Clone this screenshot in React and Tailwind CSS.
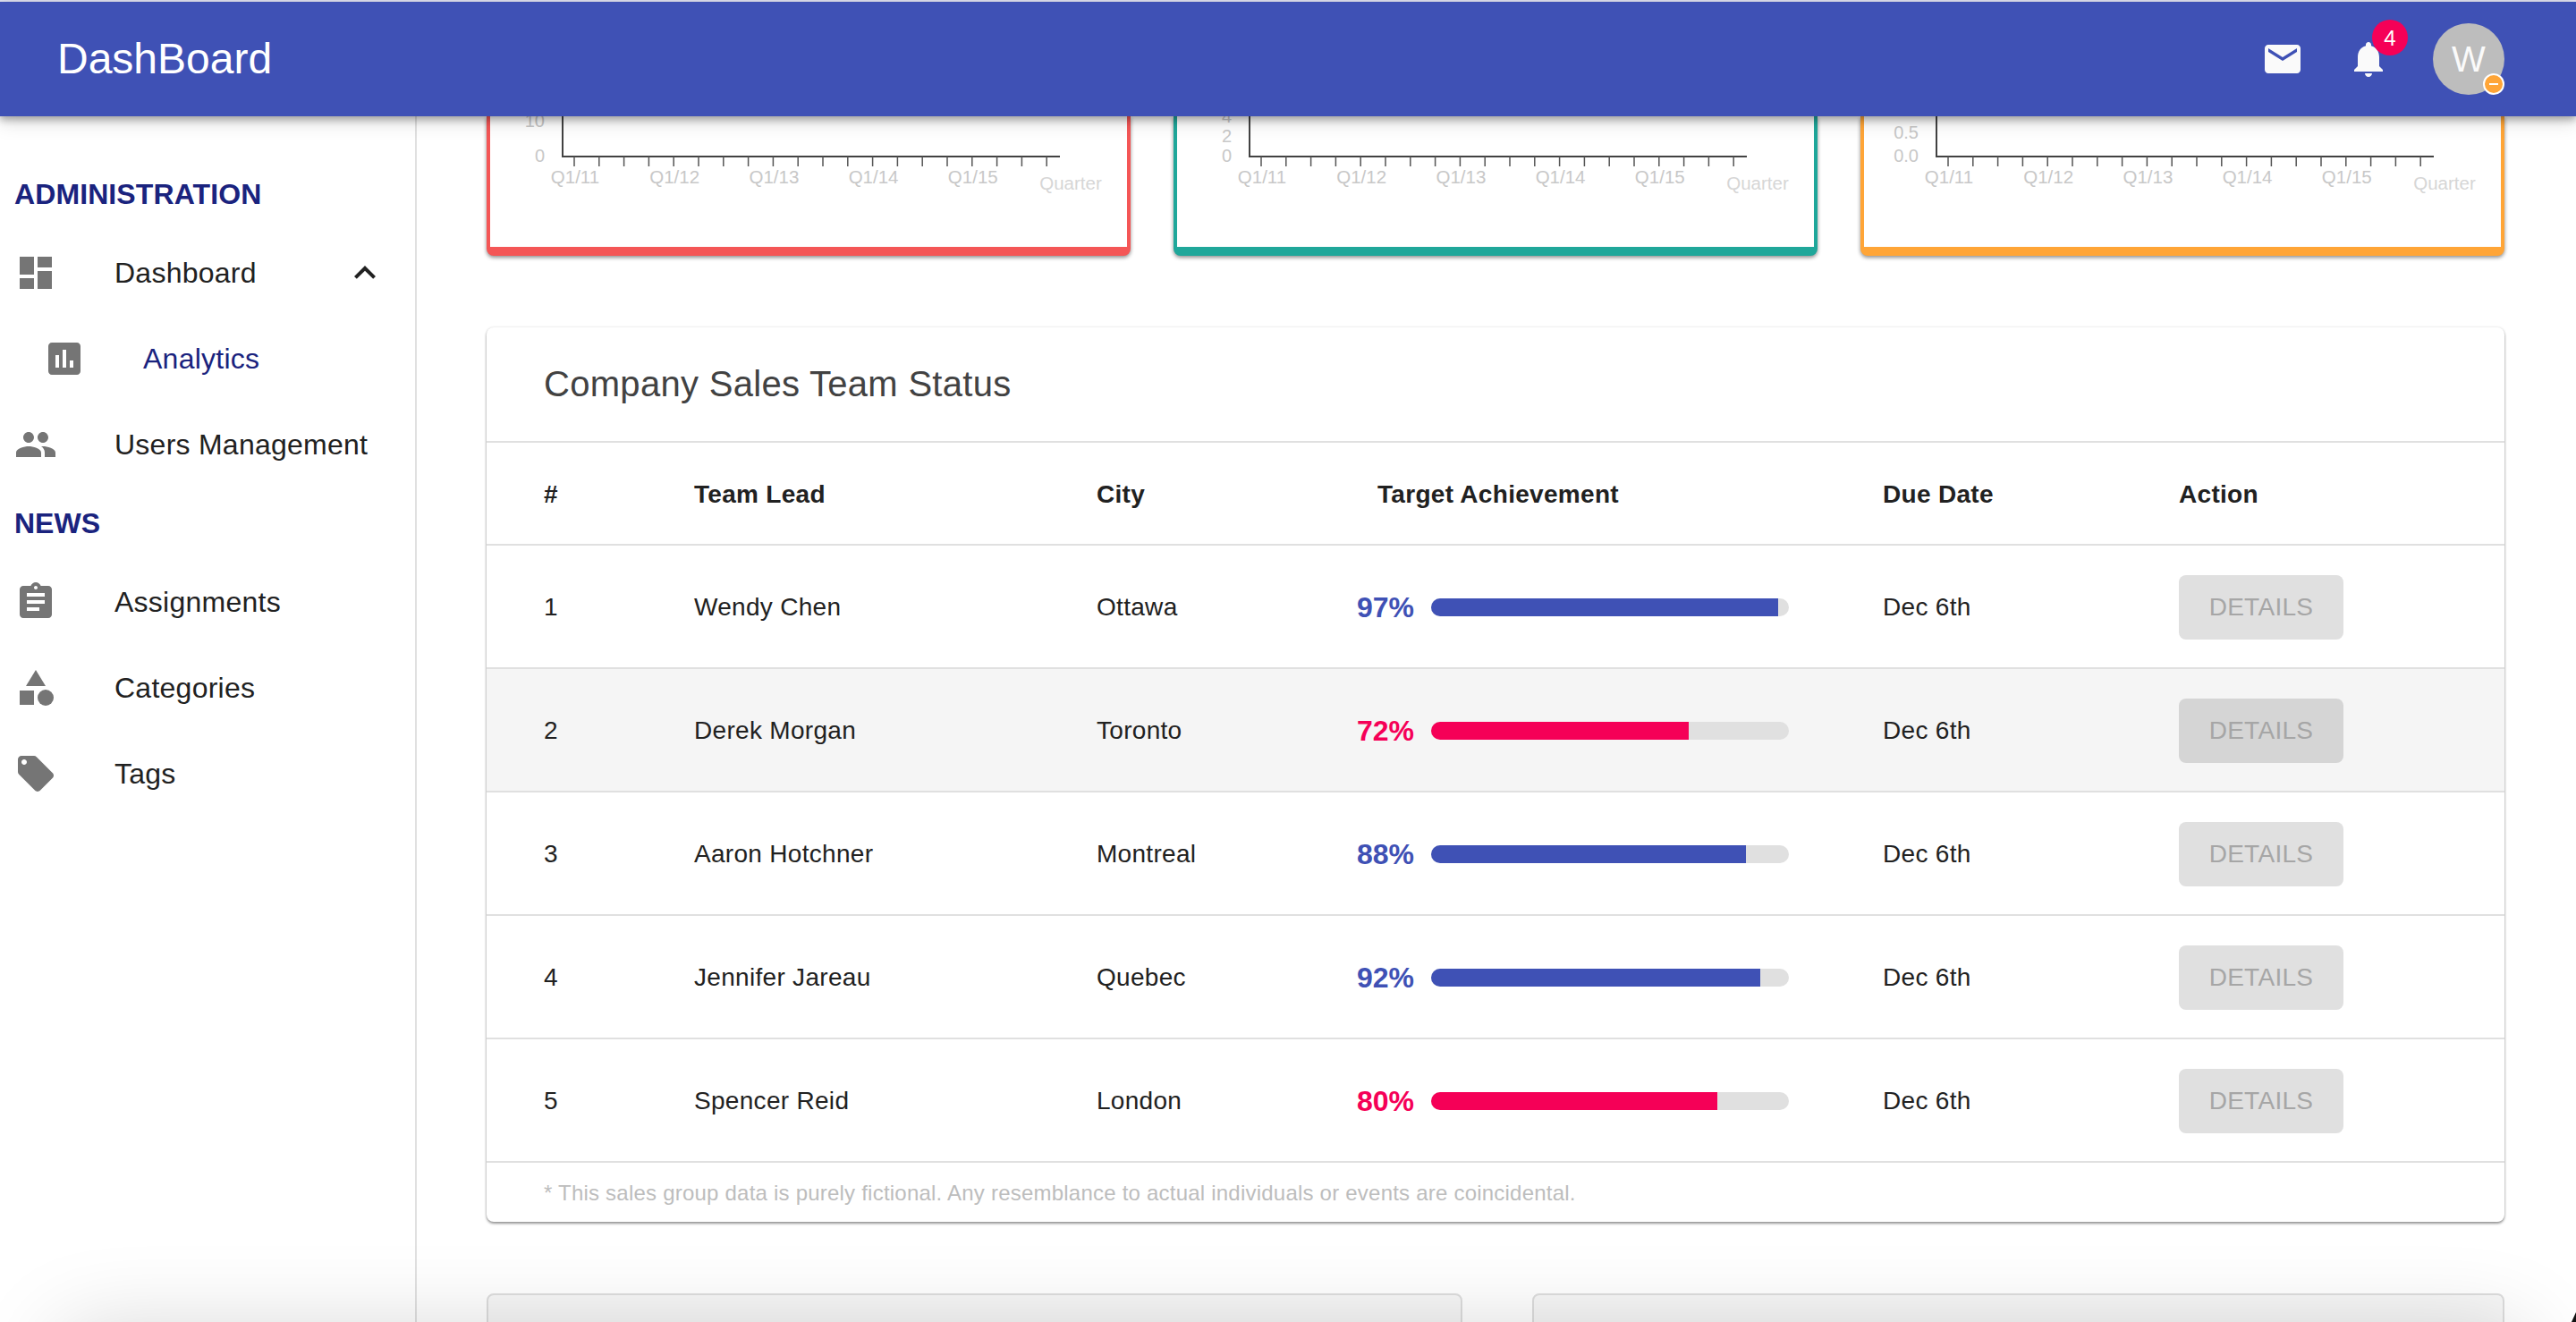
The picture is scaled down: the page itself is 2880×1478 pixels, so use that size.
import React from "react";

const rows = [
  { id: 1, name: "Wendy Chen", city: "Ottawa", pct: 97, color: "blue" },
  { id: 2, name: "Derek Morgan", city: "Toronto", pct: 72, color: "pink", shaded: true },
  { id: 3, name: "Aaron Hotchner", city: "Montreal", pct: 88, color: "blue" },
  { id: 4, name: "Jennifer Jareau", city: "Quebec", pct: 92, color: "blue" },
  { id: 5, name: "Spencer Reid", city: "London", pct: 80, color: "pink" },
];

const charts = [
  { border: "border-[#f45656]", ticks: [{ label: "10", y: 5 }, { label: "0", y: 44 }] },
  { border: "border-[#1fa79a]", ticks: [{ label: "4", y: 0 }, { label: "2", y: 22 }, { label: "0", y: 44 }] },
  { border: "border-[#ffa537]", ticks: [{ label: "0.5", y: 18 }, { label: "0.0", y: 44 }] },
];

function Icon({ d, className = "", children }) {
  return (
    <svg viewBox="0 0 24 24" className={`w-12 h-12 shrink-0 fill-current ${className}`}>
      {d && <path d={d} />}
      {children}
    </svg>
  );
}

function SideItem({ d, label, children, right, sub }) {
  return (
    <div className={`h-24 flex items-center ${sub ? "pl-12" : "pl-4"}`}>
      <Icon d={d} className="text-[#757575]">{children}</Icon>
      <span className={`ml-16 text-[32px] tracking-[0.25px] ${sub ? "text-[#1a237e]" : "text-[#212121]"}`}>{label}</span>
      {right}
    </div>
  );
}

function Chart({ chart }) {
  const xs = Array.from({ length: 20 }, (_, i) => 94 + i * 27.8);
  return (
    <div className={`h-[156px] bg-white border-x-4 border-b-[10px] rounded-b-lg shadow-[0_2px_4px_rgba(0,0,0,0.45)] ${chart.border}`}>
      <svg width="712" height="146" className="block">
        <line x1="81" y1="0" x2="81" y2="46" stroke="#424242" strokeWidth="2" />
        <line x1="80" y1="45" x2="637" y2="45" stroke="#424242" strokeWidth="2" />
        {xs.map((x) => (
          <line key={x} x1={x} y1="45" x2={x} y2="56" stroke="#555555" strokeWidth="1.5" />
        ))}
        {chart.ticks.map((t) => (
          <text key={t.label} x="61" y={t.y + 7} textAnchor="end" fontSize="20" fill="#c8c8c8">{t.label}</text>
        ))}
        {["Q1/11", "Q1/12", "Q1/13", "Q1/14", "Q1/15"].map((q, i) => (
          <text key={q} x={xs[i * 4] + 1} y="75" textAnchor="middle" fontSize="20.5" fill="#c8c8c8">{q}</text>
        ))}
        <text x="649" y="82" textAnchor="middle" fontSize="20.5" fill="#d6d6d6">Quarter</text>
      </svg>
    </div>
  );
}

export default function App() {
  return (
    <div className="relative h-[1478px] w-[2880px] overflow-hidden flex flex-col bg-white font-['Liberation_Sans',Arial,sans-serif]">
      <div className="h-0.5 bg-[#dfe1f1]" />
      <header className="relative z-10 h-32 shrink-0 bg-[#3f51b5] flex items-center pl-16 pr-20 text-white shadow-[0_4px_8px_rgba(0,0,0,0.3),0_8px_20px_rgba(0,0,0,0.12)]">
        <h1 className="text-[48px] leading-none font-normal">DashBoard</h1>
        <div className="ml-auto flex items-center">
          <Icon className="text-[#fafafa]" d="M20 4H4c-1.1 0-1.99.9-1.99 2L2 18c0 1.1.9 2 2 2h16c1.1 0 2-.9 2-2V6c0-1.1-.9-2-2-2zm0 4l-8 5-8-5V6l8 5 8-5v2z" />
          <div className="relative ml-12">
            <Icon className="text-[#fafafa]" d="M12 22c1.1 0 2-.9 2-2h-4c0 1.1.89 2 2 2zm6-6v-5c0-3.07-1.64-5.64-4.5-6.32V4c0-.83-.67-1.5-1.5-1.5s-1.5.67-1.5 1.5v.68C7.63 5.36 6 7.92 6 11v5l-2 2v1h16v-1l-2-2z" />
            <span className="absolute left-7 top-[-20px] w-10 h-10 rounded-full bg-[#f50057] flex items-center justify-center pt-0.5 text-[24px]">4</span>
          </div>
          <div className="relative ml-12 w-20 h-20 rounded-full bg-[#bdbdbd] flex items-center justify-center text-[40px] text-[#fafafa]">
            W
            <span className="absolute right-0 bottom-0 w-6 h-6 rounded-full bg-[#ffa537] border-2 border-white flex items-center justify-center">
              <span className="w-2.5 h-0.5 bg-white" />
            </span>
          </div>
        </div>
      </header>

      <div className="flex flex-1 min-h-0">
        <aside className="w-[466px] shrink-0 border-r-2 border-[#e0e0e0] pt-[47px]">
          <h2 className="h-20 pl-4 flex items-center text-[32px] font-bold tracking-[0.1px] text-[#1a237e]">ADMINISTRATION</h2>
          <SideItem
            d="M3 13h8V3H3v10zm0 8h8v-6H3v6zm10 0h8V11h-8v10zm0-18v6h8V3h-8z"
            label="Dashboard"
            right={<Icon className="text-[#212121] ml-auto mr-8" d="M12 8l-6 6 1.41 1.41L12 10.83l4.59 4.58L18 14z" />}
          />
          <SideItem sub d="M19 3H5c-1.1 0-2 .9-2 2v14c0 1.1.9 2 2 2h14c1.1 0 2-.9 2-2V5c0-1.1-.9-2-2-2zM9 17H7v-7h2v7zm4 0h-2V7h2v10zm4 0h-2v-4h2v4z" label="Analytics" />
          <SideItem d="M16 11c1.66 0 2.99-1.34 2.99-3S17.66 5 16 5c-1.66 0-3 1.34-3 3s1.34 3 3 3zm-8 0c1.66 0 2.99-1.34 2.99-3S9.66 5 8 5C6.34 5 5 6.34 5 8s1.34 3 3 3zm0 2c-2.33 0-7 1.17-7 3.5V19h14v-2.5c0-2.33-4.67-3.5-7-3.5zm8 0c-.29 0-.62.02-.97.05 1.16.84 1.97 1.97 1.97 3.45V19h6v-2.5c0-2.33-4.67-3.5-7-3.5z" label="Users Management" />
          <h2 className="h-20 pl-4 flex items-center text-[32px] font-bold text-[#1a237e]">NEWS</h2>
          <SideItem d="M19 3h-4.18C14.4 1.84 13.3 1 12 1c-1.3 0-2.4.84-2.82 2H5c-1.1 0-2 .9-2 2v14c0 1.1.9 2 2 2h14c1.1 0 2-.9 2-2V5c0-1.1-.9-2-2-2zm-7 0c.55 0 1 .45 1 1s-.45 1-1 1-1-.45-1-1 .45-1 1-1zm2 14H7v-2h7v2zm3-4H7v-2h10v2zm0-4H7V7h10v2z" label="Assignments" />
          <SideItem label="Categories">
            <path d="M12 2l-5.5 9h11z" />
            <circle cx="17.5" cy="17.5" r="4.5" />
            <path d="M3 13.5h8v8H3z" />
          </SideItem>
          <SideItem d="M21.41 11.58l-9-9C12.05 2.22 11.55 2 11 2H4c-1.1 0-2 .9-2 2v7c0 .55.22 1.05.59 1.42l9 9c.36.36.86.58 1.41.58.55 0 1.05-.22 1.41-.59l7-7c.37-.36.59-.86.59-1.41 0-.55-.23-1.06-.59-1.42zM5.5 7C4.67 7 4 6.33 4 5.5S4.67 4 5.5 4 7 4.67 7 5.5 6.33 7 5.5 7z" label="Tags" />
        </aside>

        <main className="flex-1 min-w-0 pl-[78px] pr-20">
          <div className="grid grid-cols-3 gap-12">
            {charts.map((c, i) => <Chart key={i} chart={c} />)}
          </div>

          <section className="mt-20 rounded-lg bg-white shadow-[0_0_3px_rgba(0,0,0,0.12),0_2px_3px_rgba(0,0,0,0.4)]">
            <div className="h-[129px] pb-0.5 pl-16 flex items-center border-b-2 border-[#e0e0e0] text-[40px] tracking-[0.3px] text-[#424242]">Company Sales Team Status</div>
            <table className="w-full table-fixed border-collapse text-[28px] tracking-[0.3px] text-[#212121]">
              <thead>
                <tr className="h-[114px] border-b-2 border-[#e0e0e0] font-bold text-left">
                  <th className="w-[232px] pl-16 pt-0.5">#</th>
                  <th className="w-[450px] pt-0.5">Team Lead</th>
                  <th className="w-[270px] pt-0.5">City</th>
                  <th className="w-[609px] pl-11 pt-0.5">Target Achievement</th>
                  <th className="w-[331px] pt-0.5">Due Date</th>
                  <th className="pt-0.5">Action</th>
                </tr>
              </thead>
              <tbody>
                {rows.map((r) => (
                  <tr key={r.id} className={`h-[138px] border-b-2 border-[#e0e0e0] ${r.shaded ? "bg-[#f5f5f5]" : ""}`}>
                    <td className="pl-16 pt-0.5">{r.id}</td>
                    <td className="pt-0.5">{r.name}</td>
                    <td className="pt-0.5">{r.city}</td>
                    <td className="pl-[21px] pt-0.5">
                      <div className="flex items-center">
                        <span className={`w-[65px] text-[32px] tracking-normal font-bold ${r.color === "blue" ? "text-[#3f51b5]" : "text-[#f50057]"}`}>{r.pct}%</span>
                        <div className="ml-[18px] w-[400px] h-5 rounded-[10px] bg-[#e0e0e0] overflow-hidden">
                          <div className={`h-full ${r.color === "blue" ? "bg-[#3f51b5]" : "bg-[#f50057]"}`} style={{ width: `${r.pct}%` }} />
                        </div>
                      </div>
                    </td>
                    <td className="pt-0.5">Dec 6th</td>
                    <td className="pt-0.5">
                      <button className={`w-[184px] h-[72px] rounded-lg text-[#a6a6a6] ${r.shaded ? "bg-[#d5d5d5]" : "bg-[#e0e0e0]"}`}>DETAILS</button>
                    </td>
                  </tr>
                ))}
              </tbody>
            </table>
            <div className="h-[66px] pl-16 pt-0.5 flex items-center text-[24px] tracking-[0.22px] text-[#bdbdbd]">* This sales group data is purely fictional. Any resemblance to actual individuals or events are coincidental.</div>
          </section>

          <div className="mt-20 flex gap-[78px]">
            <div className="h-40 w-[1091px] rounded-lg bg-[#f7f7f7] border-2 border-[#dddddd]" />
            <div className="h-40 flex-1 rounded-lg bg-[#f7f7f7] border-2 border-[#dddddd]" />
          </div>
        </main>
      </div>

      {/* shadow of something sitting just under the fold */}
      <div className="absolute z-20 left-[70px] right-[60px] top-[1490px] h-[200px] rounded-xl pointer-events-none shadow-[0_0_100px_rgba(0,0,0,0.18)]" />
      <svg width="5" height="11" viewBox="0 0 5 11" className="absolute z-20 right-0 bottom-0">
        <path d="M5 0L0 11h5z" fill="#111111" />
      </svg>
    </div>
  );
}
